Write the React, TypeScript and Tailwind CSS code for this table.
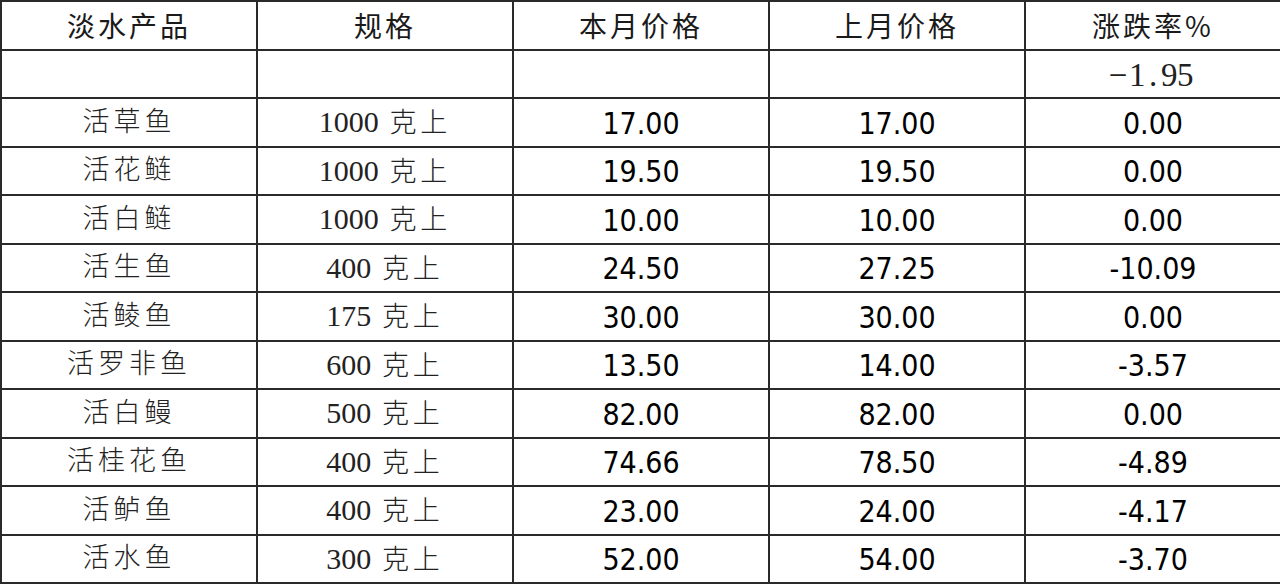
const rows = [
  { name: "活草鱼", spec: "1000", cur: "17.00", last: "17.00", rate: "0.00" },
  { name: "活花鲢", spec: "1000", cur: "19.50", last: "19.50", rate: "0.00" },
  { name: "活白鲢", spec: "1000", cur: "10.00", last: "10.00", rate: "0.00" },
  { name: "活生鱼", spec: "400", cur: "24.50", last: "27.25", rate: "-10.09" },
  { name: "活鲮鱼", spec: "175", cur: "30.00", last: "30.00", rate: "0.00" },
  { name: "活罗非鱼", spec: "600", cur: "13.50", last: "14.00", rate: "-3.57" },
  { name: "活白鳗", spec: "500", cur: "82.00", last: "82.00", rate: "0.00" },
  { name: "活桂花鱼", spec: "400", cur: "74.66", last: "78.50", rate: "-4.89" },
  { name: "活鲈鱼", spec: "400", cur: "23.00", last: "24.00", rate: "-4.17" },
  { name: "活水鱼", spec: "300", cur: "52.00", last: "54.00", rate: "-3.70" },
];

const headers = ["淡水产品", "规格", "本月价格", "上月价格", "涨跌率%"];

const cell = "border-2 border-[#2a2a2a] text-center align-middle p-0 leading-none";
const cjkSerif = "font-['Liberation_Serif','Noto_Sans_CJK_SC',serif] font-light text-[27px] tracking-[4px] text-[#222]";
const num = "font-['DejaVu_Sans_Condensed','DejaVu_Sans',sans-serif] [font-stretch:condensed] text-[30px] text-black pt-[3px]";

export default function App() {
  return (
    <div className="w-[1280px] h-[584px] bg-white overflow-hidden">
      <table className="w-[1280px] table-fixed border-collapse leading-none">
        <colgroup>
          <col className="w-[256px]" />
          <col className="w-[256px]" />
          <col className="w-[256px]" />
          <col className="w-[256px]" />
          <col className="w-[256px]" />
        </colgroup>
        <thead>
          <tr className="h-[48.5px]">
            {headers.map((h) => (
              <th
                key={h}
                className={`${cell} font-['Noto_Sans_CJK_SC',sans-serif] font-normal text-[28px] tracking-[3px] text-[#1a1a1a]`}
              >
                {h}
              </th>
            ))}
          </tr>
        </thead>
        <tbody>
          <tr className="h-[48.5px]">
            <td className={cell}></td>
            <td className={cell}></td>
            <td className={cell}></td>
            <td className={cell}></td>
            <td className={`${cell} font-['Liberation_Serif',serif] text-[33px] font-light text-[#222] pr-[6px] pt-[4px]`}>
              <span className="inline-block w-[22px]">−</span>
              <span className="inline-block w-[16px]">1</span>
              <span className="inline-block w-[16px]">.</span>
              <span className="inline-block w-[16px]">9</span>
              <span className="inline-block w-[16px]">5</span>
            </td>
          </tr>
          {rows.map((r) => (
            <tr key={r.name} className="h-[48.5px]">
              <td className={`${cell} ${cjkSerif}`}>{r.name}</td>
              <td className={`${cell} ${cjkSerif}`}>
                <span className="tracking-normal text-[30px]">{r.spec}</span> 克上
              </td>
              <td className={`${cell} ${num}`}>{r.cur}</td>
              <td className={`${cell} ${num}`}>{r.last}</td>
              <td className={`${cell} ${num}`}>{r.rate}</td>
            </tr>
          ))}
        </tbody>
      </table>
    </div>
  );
}
